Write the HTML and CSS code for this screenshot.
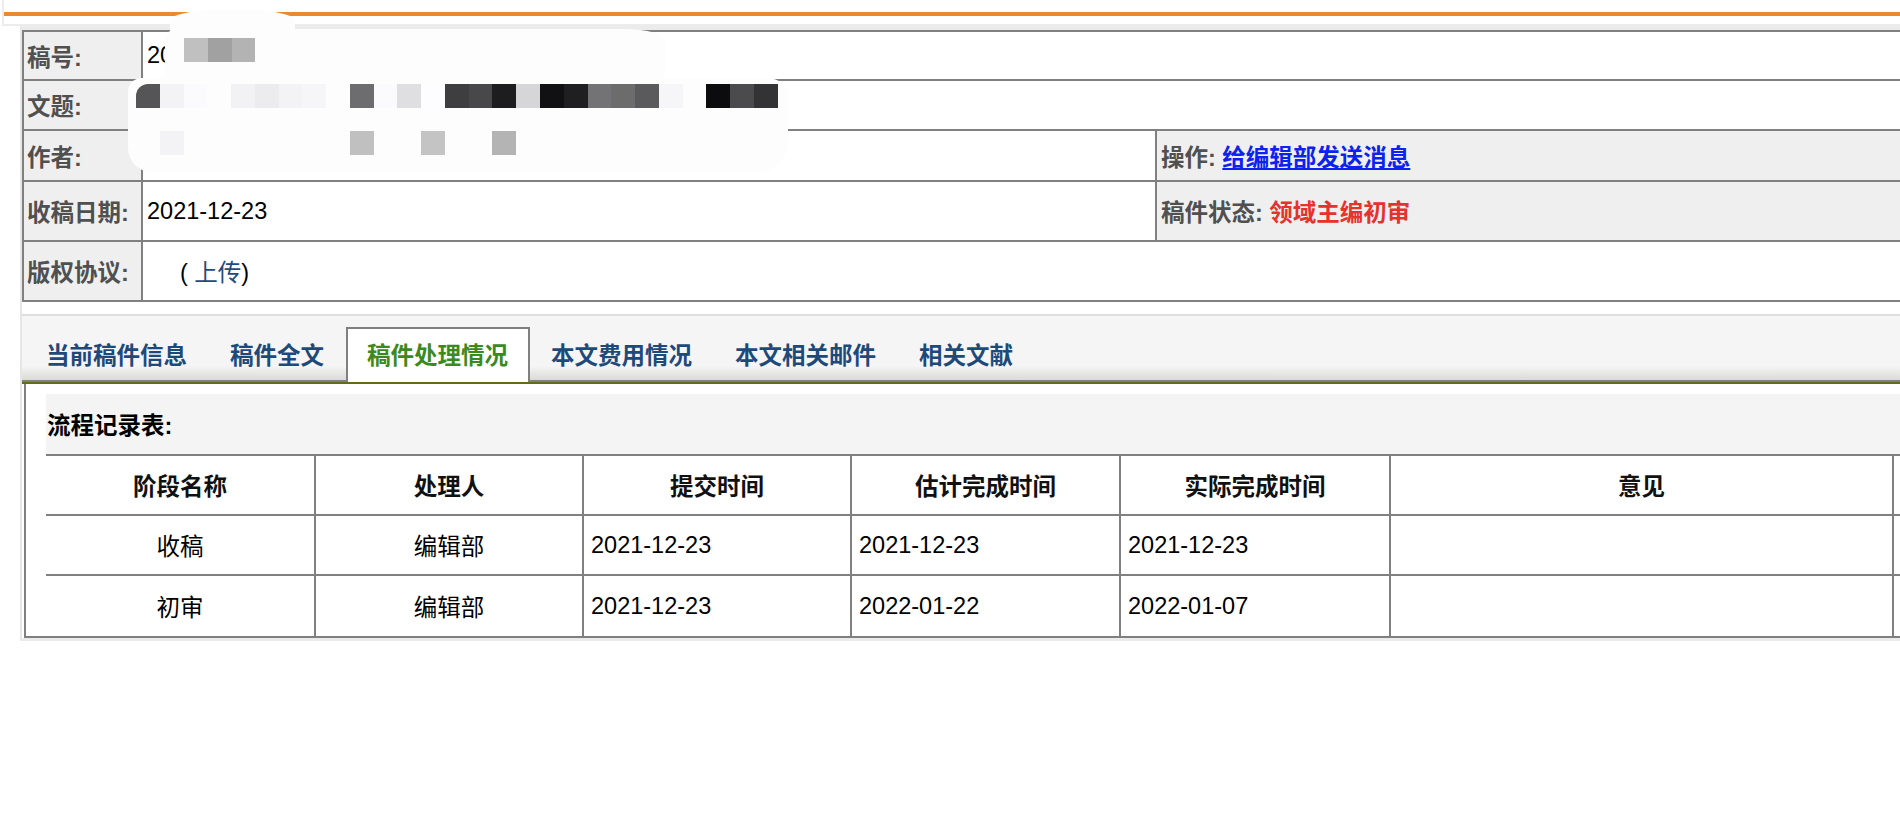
FILE: index.html
```html
<!DOCTYPE html>
<html lang="zh-CN">
<head>
    <meta charset="UTF-8">
    <title>稿件处理情况</title>
    <link rel="stylesheet" href="styles.css">
</head>
<body>

<!-- top strip with the orange rule -->
<div class="topbar"><div class="accent"></div></div>

<div class="wrap">
    <!-- manuscript summary -->
    <table class="info">
        <colgroup>
            <col class="c-label">
            <col class="c-value">
            <col class="c-side">
        </colgroup>
        <tr class="r-short">
            <th>稿号:</th>
            <td colspan="2">2021</td>
        </tr>
        <tr class="r-mid">
            <th>文题:</th>
            <td colspan="2"></td>
        </tr>
        <tr class="r-mid2">
            <th>作者:</th>
            <td></td>
            <td class="side">操作: <a href="#" class="msg">给编辑部发送消息</a></td>
        </tr>
        <tr class="r-tall">
            <th>收稿日期:</th>
            <td>2021-12-23</td>
            <td class="side">稿件状态: <span class="status">领域主编初审</span></td>
        </tr>
        <tr class="r-tall">
            <th>版权协议:</th>
            <td colspan="2"><span class="upload">( <a href="#">上传</a>)</span></td>
        </tr>
    </table>

    <!-- tabs -->
    <div class="tabs">
        <a href="#" class="tab">当前稿件信息</a>
        <a href="#" class="tab">稿件全文</a>
        <a href="#" class="tab active">稿件处理情况</a>
        <a href="#" class="tab">本文费用情况</a>
        <a href="#" class="tab">本文相关邮件</a>
        <a href="#" class="tab">相关文献</a>
    </div>

    <div class="panel">
        <table class="flow">
            <colgroup>
                <col class="w1"><col class="w2"><col class="w3"><col class="w4">
                <col class="w5"><col class="w6"><col class="w7">
            </colgroup>
            <tr class="caption">
                <td colspan="7">流程记录表:</td>
            </tr>
            <tr class="row">
                <th>阶段名称</th>
                <th>处理人</th>
                <th>提交时间</th>
                <th>估计完成时间</th>
                <th>实际完成时间</th>
                <th>意见</th>
                <th></th>
            </tr>
            <tr class="row">
                <td class="mid">收稿</td>
                <td class="mid">编辑部</td>
                <td>2021-12-23</td>
                <td>2021-12-23</td>
                <td>2021-12-23</td>
                <td></td>
                <td></td>
            </tr>
            <tr class="row last">
                <td class="mid">初审</td>
                <td class="mid">编辑部</td>
                <td>2021-12-23</td>
                <td>2022-01-22</td>
                <td>2022-01-07</td>
                <td></td>
                <td></td>
            </tr>
        </table>
    </div>
</div>

<!-- redaction mosaic laid over the title / author values -->
<div class="redact">
    <div class="cloud cloud-top"></div>
    <div class="cloud cloud-mid"></div>
    <div class="cloud cloud-low"></div>
    <div class="pix pix-a">
        <i class="g-c0"></i><i class="g-a1"></i><i class="g-b3"></i>
    </div>
    <div class="pix pix-b">
        <i class="g-55 first"></i><i class="g-f3"></i><i class="g-fb"></i><i></i>
        <i class="g-f2"></i><i class="g-ec"></i><i class="g-f3"></i><i class="g-f6"></i>
        <i></i><i class="g-6d"></i><i class="g-fb"></i><i class="g-df"></i>
        <i class="g-fd"></i><i class="g-3e"></i><i class="g-48"></i><i class="g-1d"></i>
        <i class="g-d6"></i><i class="g-11"></i><i class="g-1f"></i><i class="g-73"></i>
        <i class="g-6c"></i><i class="g-5a"></i><i class="g-f6"></i><i></i>
        <i class="g-0c"></i><i class="g-4b"></i><i class="g-33"></i>
    </div>
    <div class="pix pix-d">
        <i></i><i class="g-f3"></i><i></i><i></i><i></i><i></i><i></i><i></i>
        <i></i><i class="g-c0"></i><i></i><i></i><i class="g-c4"></i><i></i>
        <i></i><i class="g-b4"></i>
    </div>
</div>

</body>
</html>
```

FILE: styles.css
```css
html, body {
    overflow: hidden;
}
body {
    margin: 0;
    font-family: "Liberation Sans", Arial, "Noto Sans CJK SC", sans-serif;
    font-size: 23.5px;
    color: #000;
    background-color: #fff;
}
a {
    text-decoration: none;
}

/* top strip */
.topbar {
    margin-left: 2px;
    height: 12px;
    padding-top: 12px;
    border-left: 2px solid #ececec;
    border-bottom: 2px solid #ececec;
}
.topbar .accent {
    height: 4px;
    background-color: #e98a2e;
}

.wrap {
    width: 2100px;
    margin-left: 20px;
    border-top: 4px solid #ebebeb;
    border-left: 2px solid #e6e6e6;
    border-bottom: 3px solid #ebebeb;
}

/* summary table */
.info {
    border-collapse: separate;
    border-spacing: 0;
    table-layout: fixed;
    width: 1978px;
    border-top: 2px solid #808080;
    border-left: 2px solid #808080;
}
.info col.c-label { width: 119px; }
.info col.c-value { width: 1014px; }
.info col.c-side { width: 843px; }
.info th, .info td {
    border-right: 2px solid #808080;
    border-bottom: 2px solid #808080;
    vertical-align: middle;
    white-space: nowrap;
}
.info th {
    text-align: left;
    padding: 0 3px;
    background-color: #efefef;
    color: #505050;
    font-weight: bold;
}
.info td {
    padding: 0 4px;
    background-color: #fff;
}
.info tr.r-short { height: 49px; }
.info tr.r-mid { height: 50px; }
.info tr.r-mid2 { height: 51px; }
.info tr.r-tall { height: 60px; }
.info td.side {
    background-color: #efefef;
    color: #505050;
    font-weight: bold;
}
.msg {
    color: #0b22f0;
    text-decoration: underline;
}
.status {
    color: #e5332b;
}
.upload {
    margin-left: 33px;
}
.upload a {
    color: #1f4b7d;
}

/* tabs */
.tabs {
    position: relative;
    display: flex;
    align-items: flex-end;
    height: 64px;
    margin-top: 12px;
    padding-left: 2.5px;
    border-top: 2px solid #dedede;
    border-bottom: 2px solid #808080;
    background: linear-gradient(to bottom, #f5f5f5 0, #f5f5f5 78%, #dadad6 100%);
    box-shadow: 0 2px 0 #636a1c;
}
.tab {
    box-sizing: border-box;
    height: 55px;
    margin-bottom: -2px;
    padding: 0 19.5px 3px;
    display: flex;
    align-items: center;
    border: 2px solid transparent;
    border-bottom: 0;
    color: #1d4a7b;
    font-weight: bold;
    white-space: nowrap;
}
.tab.active {
    position: relative;
    z-index: 1;
    background-color: #fff;
    border-color: #808080;
    color: #3c8a1f;
}

/* process table */
.panel {
    margin-left: 2px;
    padding: 12px 0 0 20px;
    border-left: 2px solid #808080;
    border-bottom: 2px solid #808080;
}
.flow {
    border-collapse: separate;
    border-spacing: 0;
    table-layout: fixed;
    width: 2078px;
}
.flow col.w1 { width: 270px; }
.flow col.w2 { width: 268px; }
.flow col.w3 { width: 268px; }
.flow col.w4 { width: 269px; }
.flow col.w5 { width: 270px; }
.flow col.w6 { width: 503px; }
.flow col.w7 { width: 230px; }
.flow tr.caption { height: 60px; }
.flow tr.caption td {
    padding: 0 1px;
    background-color: #f4f4f4;
    font-weight: bold;
}
.flow tr.row { height: 60px; }
.flow tr.row.last { height: 62px; }
.flow tr.row th, .flow tr.row td {
    border-top: 2px solid #808080;
    border-right: 2px solid #808080;
    padding: 0 7px;
    vertical-align: middle;
    white-space: nowrap;
}
.flow th {
    font-weight: bold;
    text-align: center;
    color: #111;
}
.flow td.mid {
    text-align: center;
}

/* redaction overlay */
.redact {
    position: absolute;
    top: 0;
    left: 0;
}
.cloud {
    position: absolute;
    background-color: #fdfdfd;
}
.cloud-top {
    left: 170px;
    top: 9px;
    width: 125px;
    height: 40px;
    border-radius: 60px 60px 0 0 / 12px 12px 0 0;
}
.cloud-mid {
    left: 165px;
    top: 29px;
    width: 500px;
    height: 60px;
    border-radius: 16px 40px 0 0 / 8px 12px 0 0;
}
.cloud-low {
    left: 128px;
    top: 78px;
    width: 660px;
    height: 94px;
    border-radius: 14px 20px 30px 24px;
}
.pix {
    position: absolute;
    display: flex;
    height: 24px;
}
.pix i {
    flex: 0 0 23.78px;
    height: 24px;
}
.pix-a { left: 184px; top: 38px; }
.pix-b { left: 136px; top: 84px; }
.pix-d { left: 136px; top: 131px; }
.pix i.first { border-top-left-radius: 12px; }

.g-c0 { background-color: #c0c0c0; }
.g-a1 { background-color: #a1a1a1; }
.g-b3 { background-color: #b3b3b3; }
.g-b4 { background-color: #b4b4b4; }
.g-c4 { background-color: #c4c4c4; }
.g-55 { background-color: #555557; }
.g-f3 { background-color: #f3f3f5; }
.g-fb { background-color: #fbfbfd; }
.g-f2 { background-color: #f2f2f4; }
.g-ec { background-color: #ececee; }
.g-f6 { background-color: #f6f6f8; }
.g-6d { background-color: #6d6d6f; }
.g-df { background-color: #dfdfe1; }
.g-fd { background-color: #fdfdff; }
.g-3e { background-color: #3e3e40; }
.g-48 { background-color: #48484a; }
.g-1d { background-color: #1d1d1f; }
.g-d6 { background-color: #d6d6d8; }
.g-11 { background-color: #111113; }
.g-1f { background-color: #1f1f21; }
.g-73 { background-color: #737375; }
.g-6c { background-color: #6c6c6c; }
.g-5a { background-color: #5a5a5c; }
.g-0c { background-color: #0c0c0e; }
.g-4b { background-color: #4b4b4d; }
.g-33 { background-color: #333335; }
```
